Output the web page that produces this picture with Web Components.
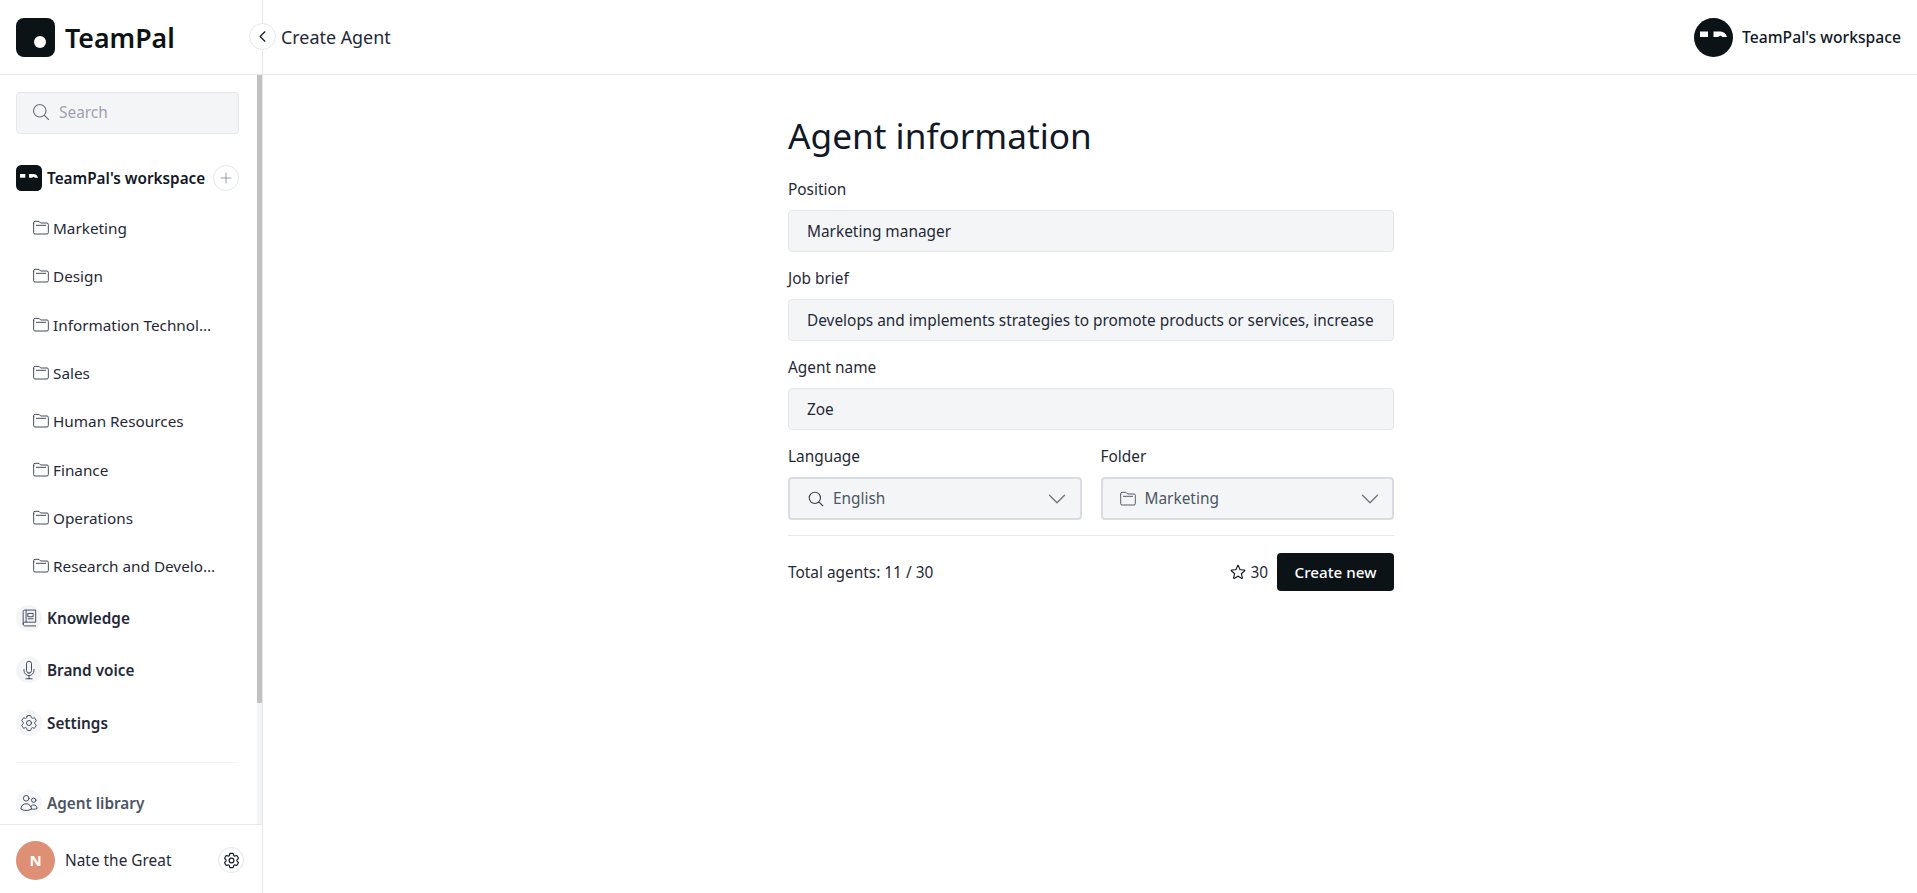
<!DOCTYPE html>
<html lang="en">
<head>
<meta charset="utf-8">
<title>TeamPal - Create Agent</title>
<style>
html, body { margin: 0; height: 100%; overflow: hidden; background: #fff; }
body { font-family: "Noto Sans", "Open Sans", sans-serif; color: #111827; }
</style>
</head>
<body>
<tp-app></tp-app>

<script>
const paths = {
  search: '<path d="M21 21l-5.197-5.197m0 0A7.500 7.500 0 105.196 5.196a7.500 7.500 0 0010.607 10.607z"/>',
  folder: '<path d="M1 5V4a2 2 0 012-2h6l2.500 2.500H21a2 2 0 012 2V19a2 2 0 01-2 2H3a2 2 0 01-2-2V5z"/><path d="M5 8h14"/>',
  plus: '<path d="M12 4.500v15m7.500-7.500h-15"/>',
  chevronLeft: '<path d="M15.750 19.500L8.250 12l7.500-7.500"/>',
  chevronDown: '<path d="M19.500 8.250l-7.500 7.500-7.500-7.500"/>',
  book: '<path d="M5 19.500V4.200C5 3 5.800 2.500 6.800 2.500H20v14.500H7c-1.200 0-2 .9-2 2.100 0 1.300.8 2.400 2 2.400h13M8.500 2.500V17"/><path d="M11 6.500h6v4h-6zM11 13h6"/>',
  mic: '<path d="M12 18.750a6 6 0 006-6v-1.500m-6 7.500a6 6 0 01-6-6v-1.500m6 7.500v3.750m-3.750 0h7.500M12 15.750a3 3 0 01-3-3V4.500a3 3 0 116 0v8.250a3 3 0 01-3 3z"/>',
  cog: '<path d="M9.594 3.940c.09-.542.56-.94 1.110-.94h2.593c.55 0 1.020.398 1.110.94l.213 1.281c.063.374.313.686.645.870.074.04.147.083.22.127.324.196.72.257 1.075.124l1.217-.456a1.125 1.125 0 011.370.49l1.296 2.247a1.125 1.125 0 01-.26 1.431l-1.003.827c-.293.24-.438.613-.431.992a6.759 6.759 0 010 .255c-.007.378.138.75.43.99l1.005.828c.424.35.534.954.26 1.430l-1.298 2.247a1.125 1.125 0 01-1.369.491l-1.217-.456c-.355-.133-.75-.072-1.076.124a6.570 6.570 0 01-.22.128c-.331.183-.581.495-.644.869l-.213 1.280c-.09.543-.56.941-1.110.941h-2.594c-.55 0-1.020-.398-1.110-.94l-.213-1.281c-.062-.374-.312-.686-.644-.87a6.520 6.520 0 01-.22-.127c-.325-.196-.72-.257-1.076-.124l-1.217.456a1.125 1.125 0 01-1.369-.49l-1.297-2.247a1.125 1.125 0 01.26-1.431l1.004-.827c.292-.24.437-.613.43-.992a6.932 6.932 0 010-.255c.007-.378-.138-.75-.43-.99l-1.004-.828a1.125 1.125 0 01-.26-1.430l1.297-2.247a1.125 1.125 0 011.370-.491l1.216.456c.356.133.751.072 1.076-.124.072-.044.146-.087.22-.128.332-.183.582-.495.644-.869l.214-1.281z"/><path d="M15 12a3 3 0 11-6 0 3 3 0 016 0z"/>',
  users: '<path d="M15 19.128a9.380 9.380 0 002.625.372 9.337 9.337 0 004.121-.952 4.125 4.125 0 00-7.533-2.493M15 19.128v-.003c0-1.113-.285-2.160-.786-3.070M15 19.128v.106A12.318 12.318 0 018.624 21c-2.331 0-4.512-.645-6.374-1.766l-.001-.109a6.375 6.375 0 0111.964-3.070M12 6.375a3.375 3.375 0 11-6.750 0 3.375 3.375 0 016.750 0zm8.250 2.250a2.625 2.625 0 11-5.250 0 2.625 2.625 0 015.250 0z"/>',
  star: '<path d="M11.480 3.499a.562.562 0 011.040 0l2.125 5.111a.563.563 0 00.475.345l5.518.442c.499.04.701.663.321.988l-4.204 3.602a.563.563 0 00-.182.557l1.285 5.385a.562.562 0 01-.84.61l-4.725-2.885a.562.562 0 00-.586 0L6.982 20.540a.562.562 0 01-.84-.61l1.285-5.386a.562.562 0 00-.182-.557l-4.204-3.602a.563.563 0 01.321-.988l5.518-.442a.563.563 0 00.475-.345L11.480 3.500z"/>'
};

function icon(name, size, stroke, width) {
  return `<svg xmlns="http://www.w3.org/2000/svg" width="${size}" height="${size}" viewBox="0 0 24 24" fill="none" stroke="${stroke}" stroke-width="${width || 1.5}" stroke-linecap="round" stroke-linejoin="round" style="display:block;flex:none">${paths[name]}</svg>`;
}

// the two little "eyes" of the workspace avatar
function eyes(size, radius) {
  return `<svg xmlns="http://www.w3.org/2000/svg" width="${size}" height="${size}" viewBox="0 0 39 39" style="display:block;flex:none"><rect width="39" height="39" rx="${radius}" fill="#0c1317"/><rect x="6" y="13.500" width="8" height="5.500" fill="#fff"/><path d="M19.500 13.500h7c3 .2 5.500 2.200 6.500 5.500h-4.500l-2-1.500-2.500 1.500h-4.500z" fill="#fff"/></svg>`;
}

class TpLogo extends HTMLElement {
  constructor() {
    super();
    this.attachShadow({ mode: "open" }).innerHTML = `
    <style>
      :host { display: flex; align-items: center; gap: 10px; height: 74px; padding-left: 16px; }
      .mark { width: 39px; height: 39px; border-radius: 8px; background: #0c1317; position: relative; flex: none; }
      .mark i { position: absolute; left: 17.500px; top: 18px; width: 12px; height: 12px; border-radius: 50%; background: #fff; }
      span { font-size: 26.700px; font-weight: 600; color: #0c1317; }
    </style>
    <div class="mark"><i></i></div><span>TeamPal</span>`;
  }
}

class TpSearch extends HTMLElement {
  constructor() {
    super();
    this.attachShadow({ mode: "open" }).innerHTML = `
    <style>
      :host { display: flex; align-items: center; gap: 8px; height: 38px; padding: 0 0 2px 14px; background: #f4f5f7; border: 1px solid #e5e7eb; border-radius: 4px; font-size: 15.400px; color: #9ca3af; }
      svg { margin-top: -1px; }
    </style>
    ${icon("search", 20, "#6b7280", 1.4)}<span>Search</span>`;
  }
}

class TpFolderRow extends HTMLElement {
  constructor() {
    super();
    this.attachShadow({ mode: "open" }).innerHTML = `
    <style>
      :host { display: flex; align-items: center; gap: 4px; height: 48.300px; padding-left: 33px; font-size: 15.300px; color: #1f2937; }
      span { width: 164px; white-space: nowrap; overflow: hidden; text-overflow: ellipsis; }
    </style>
    ${icon("folder", 16, "#374151", 1.4)}<span><slot></slot></span>`;
  }
}

class TpNavItem extends HTMLElement {
  constructor() {
    super();
    const muted = this.hasAttribute("muted");
    this.attachShadow({ mode: "open" }).innerHTML = `
    <style>
      :host { display: flex; align-items: center; gap: 5px; height: 26px; font-size: 15.300px; font-weight: 600; color: ${muted ? "#4b5563" : "#1f2937"}; }
      .dot { width: 26px; height: 26px; border-radius: 50%; background: #f4f5f7; display: flex; align-items: center; justify-content: center; flex: none; }
    </style>
    <div class="dot">${icon(this.getAttribute("icon"), 20, "#374151", 1.1)}</div><slot></slot>`;
  }
}

class TpSidebar extends HTMLElement {
  constructor() {
    super();
    const folders = ["Marketing", "Design", "Information Technology", "Sales", "Human Resources", "Finance", "Operations", "Research and Development"];
    this.attachShadow({ mode: "open" }).innerHTML = `
    <style>
      :host { display: flex; flex-direction: column; width: 262px; height: 100vh; flex: none; border-right: 1px solid #e5e7eb; position: relative; background: #fff; }
      tp-logo { border-bottom: 1px solid #e5e7eb; flex: none; }
      .body { flex: 1; min-height: 0; display: flex; }
      .scroll { flex: 1; min-width: 0; overflow: hidden; padding: 17px 18px 0 16px; box-sizing: border-box; }
      .track { width: 5px; flex: none; background: #f3f4f6; }
      .thumb { height: 628px; background: #c1c1c1; }
      .workspace { display: flex; align-items: center; gap: 5px; height: 26px; margin-top: 31px; margin-bottom: 13px; font-size: 15.300px; font-weight: 600; color: #111827; }
      .workspace .name { flex: 1; white-space: nowrap; }
      .add { width: 24px; height: 24px; border: 1px solid #e5e7eb; border-radius: 50%; display: flex; align-items: center; justify-content: center; flex: none; }
      .folders { margin-left: -16px; margin-bottom: 14.200px; }
      .nav { display: flex; flex-direction: column; gap: 26.500px; }
      hr { border: 0; border-top: 1px solid #f3f4f6; margin: 0; }
      .footer { flex: none; border-top: 1px solid #e5e7eb; display: flex; align-items: center; padding: 2px 18px 0 16px; height: 66px; gap: 10px; font-size: 15.400px; color: #1f2937; }
      .avatar { width: 39px; height: 39px; border-radius: 50%; background: #de9077; color: #fff; font-weight: 700; font-size: 15px; display: flex; align-items: center; justify-content: center; flex: none; }
      .footer .who { flex: 1; }
      .gear { width: 24px; height: 24px; border: 1px solid #e5e7eb; border-radius: 50%; display: flex; align-items: center; justify-content: center; flex: none; }
      .toggle { position: absolute; left: 249px; top: 23px; width: 25px; height: 25px; border: 1px solid #e5e7eb; border-radius: 50%; background: #fff; display: flex; align-items: center; justify-content: center; z-index: 2; }
    </style>
    <tp-logo></tp-logo>
    <div class="toggle">${icon("chevronLeft", 15, "#111827", 2)}</div>
    <div class="body">
      <div class="scroll">
        <tp-search></tp-search>
        <div class="workspace">${eyes(26, 8)}<span class="name">TeamPal's workspace</span><div class="add">${icon("plus", 16, "#6b7280", 1)}</div></div>
        <div class="folders">${folders.map(f => `<tp-folder-row>${f}</tp-folder-row>`).join("")}</div>
        <div class="nav">
          <tp-nav-item icon="book">Knowledge</tp-nav-item>
          <tp-nav-item icon="mic">Brand voice</tp-nav-item>
          <tp-nav-item icon="cog">Settings</tp-nav-item>
          <hr>
          <tp-nav-item icon="users" muted>Agent library</tp-nav-item>
        </div>
      </div>
      <div class="track"><div class="thumb"></div></div>
    </div>
    <div class="footer"><div class="avatar">N</div><span class="who">Nate the Great</span><div class="gear">${icon("cog", 19, "#111827", 1.5)}</div></div>`;
  }
}

class TpTopbar extends HTMLElement {
  constructor() {
    super();
    this.attachShadow({ mode: "open" }).innerHTML = `
    <style>
      :host { display: flex; align-items: center; justify-content: space-between; height: 74px; padding: 0 16px 0 18px; border-bottom: 1px solid #e5e7eb; flex: none; }
      .title { font-size: 17.900px; color: #1f2937; }
      .ws { display: flex; align-items: center; gap: 9px; font-size: 15.700px; font-weight: 500; color: #111827; }
      .ws svg { border-radius: 50%; }
    </style>
    <span class="title"><slot></slot></span>
    <div class="ws">${eyes(39, 0)}<span>TeamPal's workspace</span></div>`;
  }
}

class TpField extends HTMLElement {
  constructor() {
    super();
    this.attachShadow({ mode: "open" }).innerHTML = `
    <style>
      :host { display: block; }
      label { display: block; height: 20px; line-height: 20px; padding-top: 1px; margin-bottom: 10px; font-size: 15.400px; font-weight: 400; color: #1f2937; }
      .box { box-sizing: border-box; height: 42px; display: flex; align-items: center; padding: 0 18px; background: #f4f5f7; border: 1px solid #e5e7eb; border-radius: 4px; font-size: 15.400px; color: #1f2937; white-space: nowrap; overflow: hidden; }
    </style>
    <label>${this.getAttribute("label")}</label>
    <div class="box"><slot></slot></div>`;
  }
}

class TpSelect extends HTMLElement {
  constructor() {
    super();
    const name = this.getAttribute("icon");
    this.attachShadow({ mode: "open" }).innerHTML = `
    <style>
      :host { display: block; }
      label { display: block; height: 20px; line-height: 20px; padding-top: 1px; margin-bottom: 10px; font-size: 15.400px; font-weight: 400; color: #1f2937; }
      .box { box-sizing: border-box; height: 43px; display: flex; align-items: center; gap: 8px; padding: 0 10.500px 0 17px; background: #f4f5f7; border: 2px solid #d9dce1; border-radius: 4px; font-size: 15.400px; color: #4b5563; }
      .text { flex: 1; margin-left: ${name === "folder" ? 1 : 0}px; }
    </style>
    <label>${this.getAttribute("label")}</label>
    <div class="box">${name === "folder" ? icon("folder", 16, "#4b5563", 1.4) : icon(name, 18, "#374151", 1.5)}<span class="text"><slot></slot></span>${icon("chevronDown", 24, "#6b7280", 1.3)}</div>`;
  }
}

class TpAgentForm extends HTMLElement {
  constructor() {
    super();
    this.attachShadow({ mode: "open" }).innerHTML = `
    <style>
      :host { display: flex; flex-direction: column; width: 606px; margin: 0 auto; padding-top: 37px; box-sizing: content-box; }
      h1 { margin: 0 0 19px; height: 48px; line-height: 46px; font-size: 35.200px; font-weight: 400; color: #111827; }
      .fields { display: flex; flex-direction: column; gap: 16px; }
      .two { display: grid; grid-template-columns: 1fr 1fr; gap: 19px; }
      hr { border: 0; border-top: 1px solid #e5e7eb; margin: 15px 0 17px; }
      .foot { display: flex; align-items: center; height: 38px; font-size: 15.400px; color: #1f2937; }
      .total { flex: 1; }
      .credits { display: flex; align-items: center; gap: 3px; margin-right: 9px; }
      button { height: 38px; width: 117px; padding: 0; border: 0; border-radius: 4px; background: #0c1317; color: #fff; font: 500 15.200px "Noto Sans", sans-serif; }
    </style>
    <h1>Agent information</h1>
    <div class="fields">
      <tp-field label="Position">Marketing manager</tp-field>
      <tp-field label="Job brief">Develops and implements strategies to promote products or services, increase</tp-field>
      <tp-field label="Agent name">Zoe</tp-field>
      <div class="two">
        <tp-select label="Language" icon="search">English</tp-select>
        <tp-select label="Folder" icon="folder">Marketing</tp-select>
      </div>
    </div>
    <hr>
    <div class="foot">
      <span class="total">Total agents: 11 / 30</span>
      <span class="credits">${icon("star", 18, "#111827", 1.5)}30</span>
      <button>Create new</button>
    </div>`;
  }
}

class TpApp extends HTMLElement {
  constructor() {
    super();
    this.attachShadow({ mode: "open" }).innerHTML = `
    <style>
      :host { display: flex; height: 100vh; }
      main { flex: 1; min-width: 0; display: flex; flex-direction: column; }
      .content { flex: 1; padding-left: 2px; }
    </style>
    <tp-sidebar></tp-sidebar>
    <main>
      <tp-topbar>Create Agent</tp-topbar>
      <div class="content"><tp-agent-form></tp-agent-form></div>
    </main>`;
  }
}

customElements.define("tp-logo", TpLogo);
customElements.define("tp-search", TpSearch);
customElements.define("tp-folder-row", TpFolderRow);
customElements.define("tp-nav-item", TpNavItem);
customElements.define("tp-sidebar", TpSidebar);
customElements.define("tp-topbar", TpTopbar);
customElements.define("tp-field", TpField);
customElements.define("tp-select", TpSelect);
customElements.define("tp-agent-form", TpAgentForm);
customElements.define("tp-app", TpApp);
</script>
</body>
</html>
